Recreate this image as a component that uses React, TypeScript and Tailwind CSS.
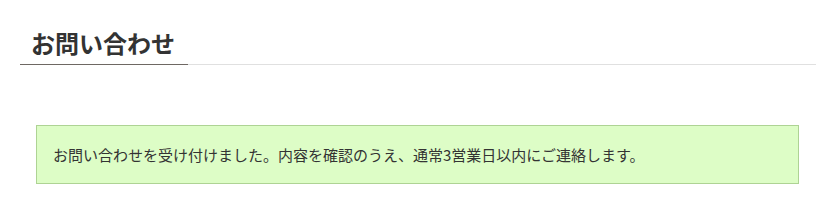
export default function App() {
  return (
    <div className="bg-white w-[839px] h-[205px] pt-[25px] pl-[20px] pr-[23px]" style={{ fontFamily: '"Noto Sans CJK JP", "Noto Sans", sans-serif' }}>
      <div className="border-b border-[#e0e0e0] flex">
        <h1 className="text-[24px] font-bold text-[#333] leading-[36px] pl-[11px] pr-[13px] pb-[3px] border-b border-[#6e6863] -mb-px">
          お問い合わせ
        </h1>
      </div>
      <div className="mt-[60px] ml-[16px] mr-[17px] bg-[#ddfdc6] border border-[#aed394] h-[59px] flex items-center pl-[16px] pt-[1px] text-[15px] text-[#333]">
        お問い合わせを受け付けました。内容を確認のうえ、通常3営業日以内にご連絡します。
      </div>
    </div>
  );
}
